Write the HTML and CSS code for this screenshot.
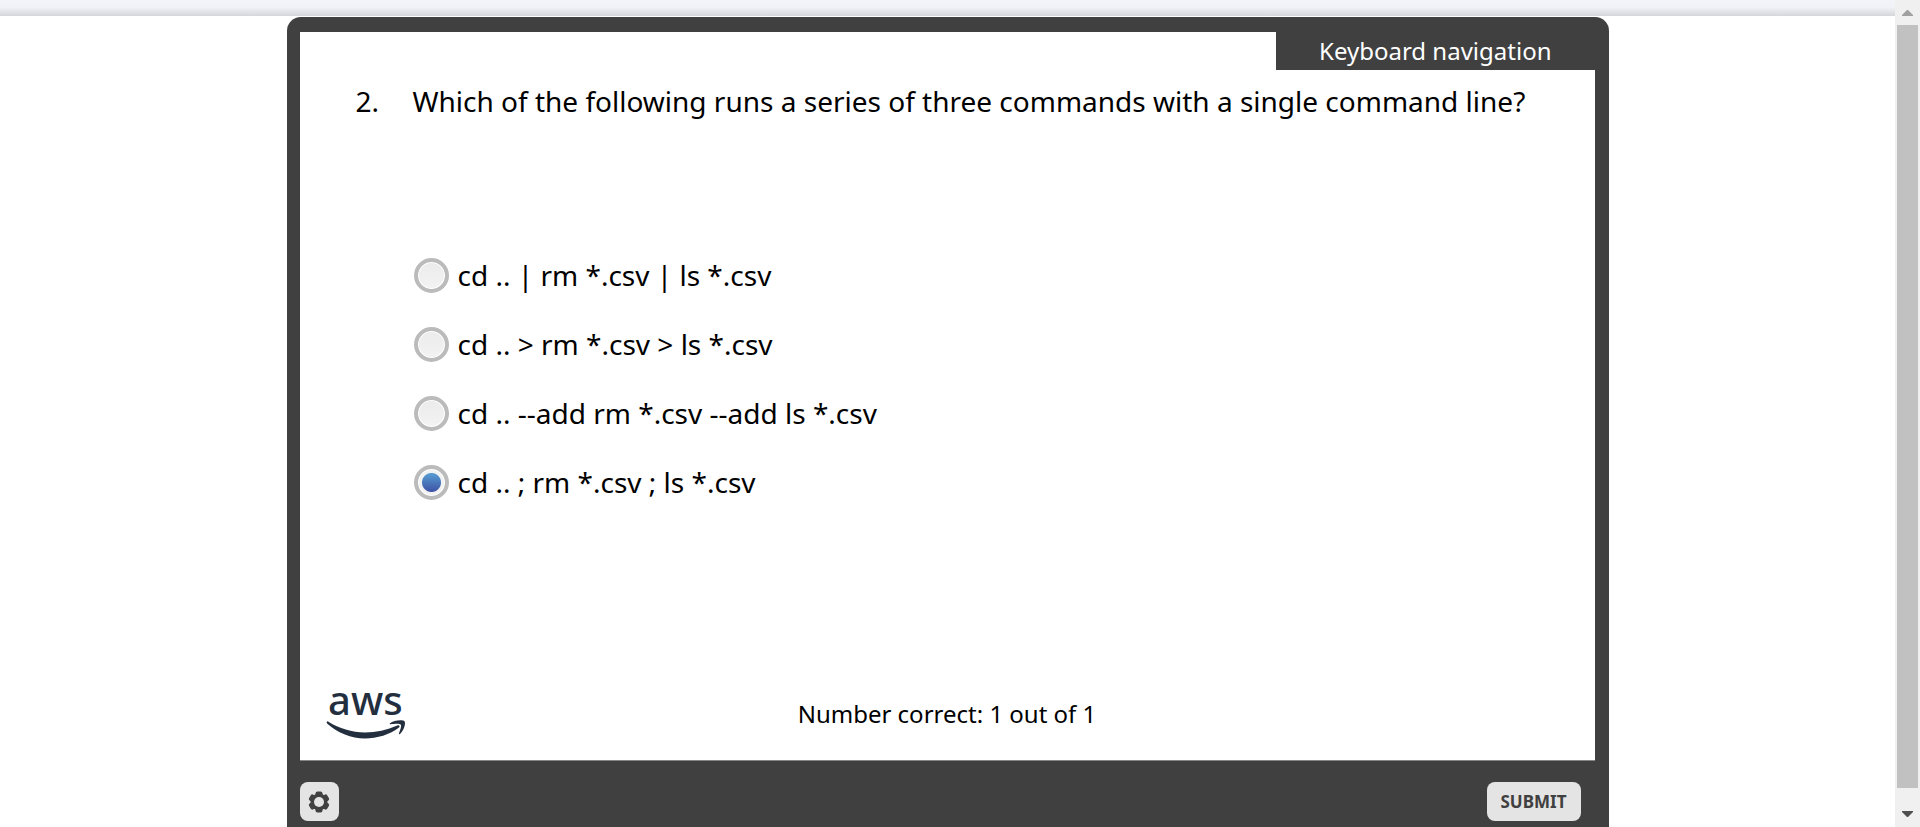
FILE: index.html
```html
<!DOCTYPE html>
<html lang="en">
<head>
<meta charset="utf-8">
<meta name="viewport" content="width=device-width, initial-scale=1">
<title>Keyboard navigation</title>
<link rel="stylesheet" href="styles.css">
</head>
<body>
<div class="viewport">
  <div class="page">
    <header class="topbar"></header>
    <main class="player">
      <form class="slide">
        <h1 class="slide-title">Keyboard navigation</h1>
        <div class="question">
          <span class="question-number">2.</span>
          <p class="question-text" id="question">Which of the following runs a series of three commands with a single command line?</p>
        </div>
        <div class="choices" role="radiogroup" aria-labelledby="question">
          <label class="choice"><input class="radio" type="radio" name="answer"><span>cd .. | rm *.csv | ls *.csv</span></label>
          <label class="choice"><input class="radio" type="radio" name="answer"><span>cd .. &gt; rm *.csv &gt; ls *.csv</span></label>
          <label class="choice"><input class="radio" type="radio" name="answer"><span>cd .. --add rm *.csv --add ls *.csv</span></label>
          <label class="choice"><input class="radio" type="radio" name="answer" checked><span>cd .. ; rm *.csv ; ls *.csv</span></label>
        </div>
        <div class="slide-footer">
          <svg class="logo" viewBox="0 -20 80 70" role="img" aria-label="aws">
            <text class="logo-text" x="2" y="26">aws</text>
            <path class="logo-mark" d="M1 32.500Q0 33.600 1.300 34.800C12 44 25 49.500 39 49.500C51 49.500 64 45.500 73 38.500C74.500 37.300 73 35.700 71.300 36.500C61 41 50 43.500 39 43.500C26 43.500 13 39.500 2.500 32.800Q1.500 32 1 32.500Z"/>
            <path class="logo-mark" d="M64 34.300C67.500 31 77 30.500 78.500 32.200C80 34 78 41.500 74 44.900C73.300 45.500 72.700 45.100 73 44.300C74 41.500 75.800 37 74.800 35.700C73.800 34.300 68 34.900 64.600 35.300C63.700 35.400 63.400 34.900 64 34.300Z"/>
          </svg>
          <output class="score">Number correct: 1 out of 1</output>
        </div>
      </form>
      <div class="controls">
        <button class="button button-icon" type="button" aria-label="Settings">
          <svg class="gear" viewBox="0 0 22 22" aria-hidden="true">
            <g class="gear-teeth">
              <rect x="7.500" y="0.500" width="7" height="21" rx="2"/>
              <rect x="7.500" y="0.500" width="7" height="21" rx="2" transform="rotate(60 11 11)"/>
              <rect x="7.500" y="0.500" width="7" height="21" rx="2" transform="rotate(120 11 11)"/>
              <circle cx="11" cy="11" r="8.500"/>
            </g>
            <circle class="gear-hole" cx="11" cy="11" r="5"/>
          </svg>
        </button>
        <button class="button button-submit" type="button">SUBMIT</button>
      </div>
    </main>
  </div>
  <div class="scrollbar" aria-hidden="true">
    <svg class="arrow arrow-up" viewBox="0 0 11 6"><path d="M5 0h1l5 5v1H0V5z"/></svg>
    <div class="thumb"></div>
    <svg class="arrow arrow-down" viewBox="0 0 11 6"><path d="M0 0h11v1L6 6H5L0 1z"/></svg>
  </div>
</div>
</body>
</html>
```
FILE: styles.css
```css
* {
  box-sizing: border-box;
}

body {
  margin: 0;
  background: #fff;
  color: #000;
  font-family: "Noto Sans", "Open Sans", sans-serif;
}

.viewport {
  display: grid;
  grid-template-columns: 1fr 25px;
  height: 100vh;
  overflow: hidden;
}

.page {
  overflow: hidden;
}

.topbar {
  height: 16px;
  margin-bottom: 1px;
  background: linear-gradient(#f3f4fa 0, #f1f2f7 45%, #d5d6da 100%);
}

.player {
  max-width: 1322px;
  margin: 0 auto;
  padding: 15px 14px 16px 13px;
  border-radius: 14px 14px 0 0;
  background: #404040;
}

.slide {
  display: flex;
  flex-direction: column;
  background: #fff;
  border-bottom: 1px solid #868686;
}

.slide-title {
  align-self: flex-end;
  margin: 0;
  padding: 0 43px;
  background: #404040;
  color: #fff;
  font-size: 24px;
  font-weight: 400;
  line-height: 38px;
}

.question {
  display: grid;
  grid-template-columns: 57px 1fr;
  padding: 11px 0 0 56px;
  font-size: 28px;
  line-height: 40px;
}

.question-text {
  margin: 0;
}

.choices {
  display: flex;
  flex-direction: column;
  gap: 29px;
  padding: 134px 0 0 114px;
  font-size: 28px;
  line-height: 40px;
}

.choice {
  display: flex;
  align-items: center;
  gap: 9px;
}

.radio {
  flex: none;
  width: 35px;
  height: 35px;
  margin: 0;
  appearance: none;
  border: 4px solid #bbb;
  border-radius: 50%;
  background: linear-gradient(#ebebeb, #f3f3f3);
  box-shadow: inset 0 0 0 1px #fff;
}

.radio:checked {
  background: radial-gradient(circle, transparent 9px, #f2f2f2 10px), linear-gradient(#5699d0 20%, #4057a8 80%);
}

.slide-footer {
  display: grid;
  grid-template-columns: 1fr auto 1fr;
  align-items: end;
  padding: 167px 26px 21px;
}

.logo {
  width: 80px;
  height: 70px;
}

.logo-text {
  fill: #232f3e;
  font-size: 40px;
  font-weight: 500;
}

.logo-mark {
  fill: #232f3e;
}

.score {
  padding-bottom: 9px;
  font-size: 24px;
  line-height: 32px;
}

.controls {
  display: flex;
  justify-content: space-between;
  padding: 21px 14px 0 0;
}

.button {
  display: flex;
  align-items: center;
  justify-content: center;
  height: 39px;
  padding: 0;
  border: 0;
  border-radius: 8px;
  background: #e4e4e4;
  color: #404040;
  font-family: inherit;
  font-size: 17px;
  font-weight: 700;
}

.button-icon {
  width: 39px;
}

.button-submit {
  width: 94px;
}

.gear {
  width: 22px;
  height: 22px;
}

.gear-teeth {
  fill: #404040;
}

.gear-hole {
  fill: #e4e4e4;
}

.scrollbar {
  display: flex;
  flex-direction: column;
  align-items: center;
  padding: 10px 2px;
  background: #f0f0f0;
}

.arrow {
  flex: none;
  width: 11px;
  height: 6px;
}

.arrow-up {
  margin-bottom: 9px;
  fill: #a0a0a0;
}

.arrow-down {
  margin-top: 23px;
  fill: #505050;
}

.thumb {
  flex: 1;
  width: 100%;
  background: #c1c1c1;
}
```
